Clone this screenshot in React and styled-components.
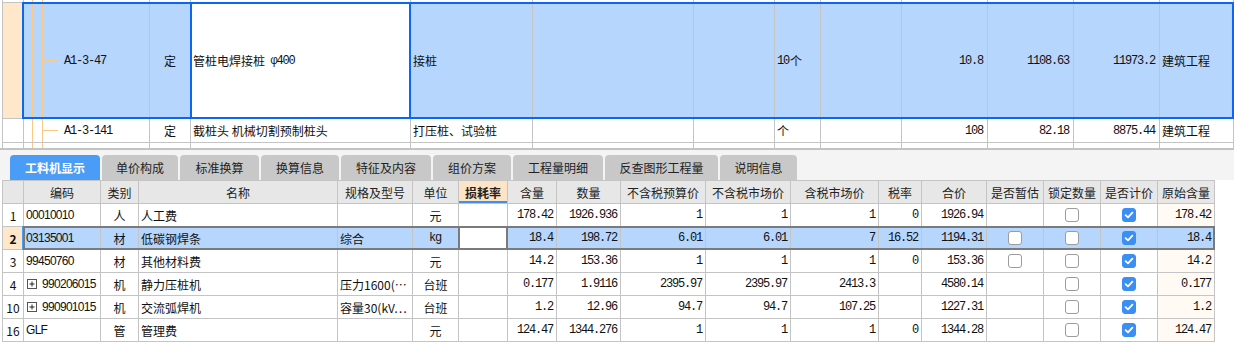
import React from 'react';
import styled, { createGlobalStyle, css } from 'styled-components';

const LINE = '#c4c4c4';
const BLUE = '#0a66f7';
const SEL = '#b6d6fe';
const PEACH = '#ffe7c9';
const TREE = '#fcc882';
const EDIT = '#7a7a7a';

const GlobalStyle = createGlobalStyle`
  html, body { margin: 0; padding: 0; background: #fff; }
  body {
    font-family: "Noto Sans CJK SC", "Liberation Sans", sans-serif;
    font-size: 12px;
    color: #111;
  }
  * { box-sizing: border-box; }
`;

const TOP_COLS = [21, 126, 41, 220, 122, 161, 81, 46, 81, 86, 86, 86];
const BOTTOM_COLS = [21, 77, 38, 199, 75, 46, 49, 49, 64, 85, 85, 88, 43, 65, 57, 57, 57, 57];

const Page = styled.div`
  width: 1234px;
  height: 353px;
  overflow: hidden;
  display: flex;
  flex-direction: column;
  background: #fff;
`;

/* ---------- upper (quota) grid ---------- */

const TopPanel = styled.div`
  height: 150px;
  flex: none;
  padding-left: 2px;
  overflow: hidden;
  border-bottom: 2px solid #c2c2c2;
`;

const TopGrid = styled.div`
  border-left: 1px solid ${LINE};
  height: 100%;
`;

const TopRow = styled.div`
  position: relative;
  display: grid;
  grid-template-columns: ${TOP_COLS.map(w => w + 'px').join(' ')} 1fr;
  height: ${p => p.$h}px;
  border-bottom: ${p => (p.$last ? 'none' : `1px solid ${LINE}`)};

  ${p => p.$selected && css`
    &::after {
      content: '';
      position: absolute;
      left: 19px;
      right: 0;
      top: -1px;
      bottom: -1px;
      border: 2px solid ${BLUE};
      pointer-events: none;
    }
  `}
`;

const TopCell = styled.div`
  position: relative;
  display: flex;
  align-items: center;
  justify-content: ${p => (p.$align === 'right' ? 'flex-end' : p.$align === 'center' ? 'center' : 'flex-start')};
  padding: ${p => (p.$align === 'right' ? '0 3px 0 0' : p.$align === 'center' ? '0' : '0 0 0 2px')};
  border-right: 1px solid ${LINE};
  background: ${p => p.$bg || 'transparent'};
  white-space: nowrap;
  overflow: visible;

  ${p => p.$editing && css`
    &::after {
      content: '';
      position: absolute;
      left: -1px;
      right: -1px;
      top: -1px;
      bottom: -1px;
      border: 2px solid ${BLUE};
      pointer-events: none;
    }
  `}
`;

const TreeCell = styled(TopCell)`
  padding-left: 40px;
  background-color: ${p => p.$bg || 'transparent'};
  background-image: linear-gradient(${TREE}, ${TREE}), linear-gradient(${TREE}, ${TREE})
    ${p => (p.$branch ? `, linear-gradient(${TREE}, ${TREE})` : '')};
  background-repeat: no-repeat;
  background-size: 1px 100%, 1px 100%, 15px 1px;
  background-position: 8px 0, 18px 0, 19px 50%;
`;

const Mono = styled.span`
  font-family: "Liberation Mono", "DejaVu Sans Mono", monospace;
  font-size: 12px;
  letter-spacing: -1.2px;
  padding-right: 1px;
`;

const CodeText = styled.span`
  font-family: "Liberation Sans", Arial, sans-serif;
  font-size: 12px;
  letter-spacing: -0.7px;
`;

/* ---------- tabs ---------- */

const TabStrip = styled.div`
  height: 30px;
  flex: none;
  display: flex;
  align-items: flex-end;
  gap: 2px;
  padding-left: 10px;
  background: #f4f4f4;
`;

const Tab = styled.div`
  width: ${p => p.$w}px;
  height: 25px;
  border-radius: 4px 4px 0 0;
  display: flex;
  align-items: center;
  justify-content: center;
  font-size: 12px;
  background: ${p => (p.$active ? '#4a9cf6' : '#c8c8c8')};
  color: ${p => (p.$active ? '#fff' : '#222')};
  font-weight: ${p => (p.$active ? 'bold' : 'normal')};
`;

/* ---------- lower (resources) grid ---------- */

const BottomGrid = styled.div`
  margin-left: 2px;
  width: 1213px;
  border-left: 1px solid ${LINE};
  border-top: 1px solid ${LINE};
`;

const GridRow = styled.div`
  position: relative;
  display: grid;
  grid-template-columns: ${BOTTOM_COLS.map(w => w + 'px').join(' ')};
  height: 23px;
  border-bottom: 1px solid ${LINE};
  background: ${p => (p.$header ? '#e7e7e7' : p.$selected ? SEL : '#fff')};

  ${p => p.$selected && css`
    &::after {
      content: '';
      position: absolute;
      left: 20px;
      right: 0;
      top: -1px;
      bottom: -1px;
      border: 2px solid ${EDIT};
      box-shadow: -1px 0 0 #4a9cf6;
      pointer-events: none;
    }
  `}
`;

const Cell = styled.div`
  position: relative;
  display: flex;
  align-items: center;
  justify-content: ${p => (p.$align === 'right' ? 'flex-end' : p.$align === 'center' ? 'center' : 'flex-start')};
  padding: ${p => (p.$align === 'right' ? '0 2px 0 0' : p.$align === 'center' ? '0' : '0 0 0 2px')};
  border-right: 1px solid ${LINE};
  background: ${p => p.$bg || 'transparent'};
  font-weight: ${p => (p.$bold ? 'bold' : 'normal')};
  white-space: nowrap;
  overflow: hidden;

  ${p => p.$editing && css`
    overflow: visible;
    &::after {
      content: '';
      position: absolute;
      left: -1px;
      right: -1px;
      top: -1px;
      bottom: -1px;
      border: 2px solid ${EDIT};
      pointer-events: none;
    }
  `}
`;

const HeadCell = styled(Cell)`
  justify-content: center;
  padding: 0;
  color: #222;
  ${p => p.$hot && css`
    background: #fde4c6;
    font-weight: bold;
    box-shadow: inset 0 -2px 0 #3d8ff5;
  `}
`;

const Box = styled.span`
  width: 14px;
  height: 14px;
  border-radius: 3px;
  border: 1px solid ${p => (p.$checked ? '#3b8ef4' : '#9c9c9c')};
  background: ${p => (p.$checked ? '#3b8ef4' : '#fff')};
  display: flex;
  align-items: center;
  justify-content: center;
`;

const Expander = styled.svg`
  flex: none;
  margin: 0 5px 0 1px;
`;

const Check = ({ checked }) => (
  <Box $checked={checked}>
    {checked && (
      <svg width="10" height="10" viewBox="0 0 10 10">
        <path d="M1.6 5.2 L4 7.4 L8.4 2.6" fill="none" stroke="#fff" strokeWidth="1.8" strokeLinecap="round" strokeLinejoin="round" />
      </svg>
    )}
  </Box>
);

const Plus = () => (
  <Expander width="10" height="10" viewBox="0 0 10 10">
    <rect x="0.5" y="0.5" width="9" height="9" fill="#fff" stroke="#555" />
    <path d="M2.5 5 H7.5 M5 2.5 V7.5" stroke="#222" strokeWidth="1" />
  </Expander>
);

const tabs = [
  ['工料机显示', 90, true],
  ['单价构成', 76],
  ['标准换算', 79],
  ['换算信息', 78],
  ['特征及内容', 90],
  ['组价方案', 78],
  ['工程量明细', 90],
  ['反查图形工程量', 113],
  ['说明信息', 77],
];

const headers = ['', '编码', '类别', '名称', '规格及型号', '单位', '损耗率', '含量', '数量', '不含税预算价', '不含税市场价', '含税市场价', '税率', '合价', '是否暂估', '锁定数量', '是否计价', '原始含量'];

const rows = [
  { no: '1', code: '00010010', kind: '人', name: '人工费', spec: '', unit: '元', qty: '178.42', amount: '1926.936', p1: '1', p2: '1', p3: '1', tax: '0', total: '1926.94', zg: null, orig: '178.42' },
  { no: '2', code: '03135001', kind: '材', name: '低碳钢焊条', spec: '综合', unit: 'kg', qty: '18.4', amount: '198.72', p1: '6.01', p2: '6.01', p3: '7', tax: '16.52', total: '1194.31', zg: false, orig: '18.4', selected: true },
  { no: '3', code: '99450760', kind: '材', name: '其他材料费', spec: '', unit: '元', qty: '14.2', amount: '153.36', p1: '1', p2: '1', p3: '1', tax: '0', total: '153.36', zg: false, orig: '14.2' },
  { no: '4', code: '990206015', plus: true, kind: '机', name: '静力压桩机', spec: '压力1600(…', unit: '台班', qty: '0.177', amount: '1.9116', p1: '2395.97', p2: '2395.97', p3: '2413.3', tax: '', total: '4580.14', zg: null, orig: '0.177' },
  { no: '10', code: '990901015', plus: true, kind: '机', name: '交流弧焊机', spec: '容量30(kV…', unit: '台班', qty: '1.2', amount: '12.96', p1: '94.7', p2: '94.7', p3: '107.25', tax: '', total: '1227.31', zg: null, orig: '1.2' },
  { no: '16', code: 'GLF', kind: '管', name: '管理费', spec: '', unit: '元', qty: '124.47', amount: '1344.276', p1: '1', p2: '1', p3: '1', tax: '0', total: '1344.28', zg: null, orig: '124.47' },
];

const Num = ({ children }) => <Mono>{children}</Mono>;

export default function App() {
  return (
    <Page>
      <GlobalStyle />
      <TopPanel>
        <TopGrid>
          <TopRow $h={3}>
            <TopCell />
            <TreeCell />
            {TOP_COLS.slice(2).map((_, i) => <TopCell key={i} />)}
            <TopCell />
          </TopRow>
          <TopRow $h={116} $selected>
            <TopCell $bg={PEACH} />
            <TreeCell $bg={SEL} $branch><Num>A1-3-47</Num></TreeCell>
            <TopCell $bg={SEL} $align="center">定</TopCell>
            <TopCell $bg="#fff" $editing>管桩电焊接桩&nbsp;&nbsp;<Num>φ400</Num></TopCell>
            <TopCell $bg={SEL}>接桩</TopCell>
            <TopCell $bg={SEL} />
            <TopCell $bg={SEL} />
            <TopCell $bg={SEL}><Num>10</Num>个</TopCell>
            <TopCell $bg={SEL} />
            <TopCell $bg={SEL} $align="right"><Num>10.8</Num></TopCell>
            <TopCell $bg={SEL} $align="right"><Num>1108.63</Num></TopCell>
            <TopCell $bg={SEL} $align="right"><Num>11973.2</Num></TopCell>
            <TopCell $bg={SEL}>建筑工程</TopCell>
          </TopRow>
          <TopRow $h={24}>
            <TopCell />
            <TreeCell $branch><Num>A1-3-141</Num></TreeCell>
            <TopCell $align="center">定</TopCell>
            <TopCell>截桩头 机械切割预制桩头</TopCell>
            <TopCell>打压桩、试验桩</TopCell>
            <TopCell />
            <TopCell />
            <TopCell>个</TopCell>
            <TopCell />
            <TopCell $align="right"><Num>108</Num></TopCell>
            <TopCell $align="right"><Num>82.18</Num></TopCell>
            <TopCell $align="right"><Num>8875.44</Num></TopCell>
            <TopCell>建筑工程</TopCell>
          </TopRow>
          <TopRow $h={5} $last>
            <TopCell />
            <TreeCell />
            {TOP_COLS.slice(2).map((_, i) => <TopCell key={i} />)}
            <TopCell />
          </TopRow>
        </TopGrid>
      </TopPanel>

      <TabStrip>
        {tabs.map(([label, w, active]) => (
          <Tab key={label} $w={w} $active={active}>{label}</Tab>
        ))}
      </TabStrip>

      <BottomGrid>
        <GridRow $header>
          {headers.map((h, i) => (
            <HeadCell key={i} $hot={h === '损耗率'}>{h}</HeadCell>
          ))}
        </GridRow>
        {rows.map(r => {
          const sel = r.selected;
          return (
            <GridRow key={r.no} $selected={sel}>
              <Cell $align="center" $bg={sel ? PEACH : undefined} $bold={sel}>{r.no}</Cell>
              <Cell>
                {r.plus && <Plus />}
                <CodeText>{r.code}</CodeText>
              </Cell>
              <Cell $align="center">{r.kind}</Cell>
              <Cell>{r.name}</Cell>
              <Cell>{r.spec}</Cell>
              <Cell $align="center">{r.unit === 'kg' ? <Num>kg</Num> : r.unit}</Cell>
              <Cell $bg={sel ? '#fff' : undefined} $editing={sel} />
              <Cell $align="right"><Num>{r.qty}</Num></Cell>
              <Cell $align="right"><Num>{r.amount}</Num></Cell>
              <Cell $align="right"><Num>{r.p1}</Num></Cell>
              <Cell $align="right"><Num>{r.p2}</Num></Cell>
              <Cell $align="right"><Num>{r.p3}</Num></Cell>
              <Cell $align="right"><Num>{r.tax}</Num></Cell>
              <Cell $align="right"><Num>{r.total}</Num></Cell>
              <Cell $align="center">{r.zg !== null && <Check checked={r.zg} />}</Cell>
              <Cell $align="center"><Check checked={false} /></Cell>
              <Cell $align="center"><Check checked /></Cell>
              <Cell $align="right" $bg={sel ? undefined : '#fffaf4'}><Num>{r.orig}</Num></Cell>
            </GridRow>
          );
        })}
      </BottomGrid>
    </Page>
  );
}
